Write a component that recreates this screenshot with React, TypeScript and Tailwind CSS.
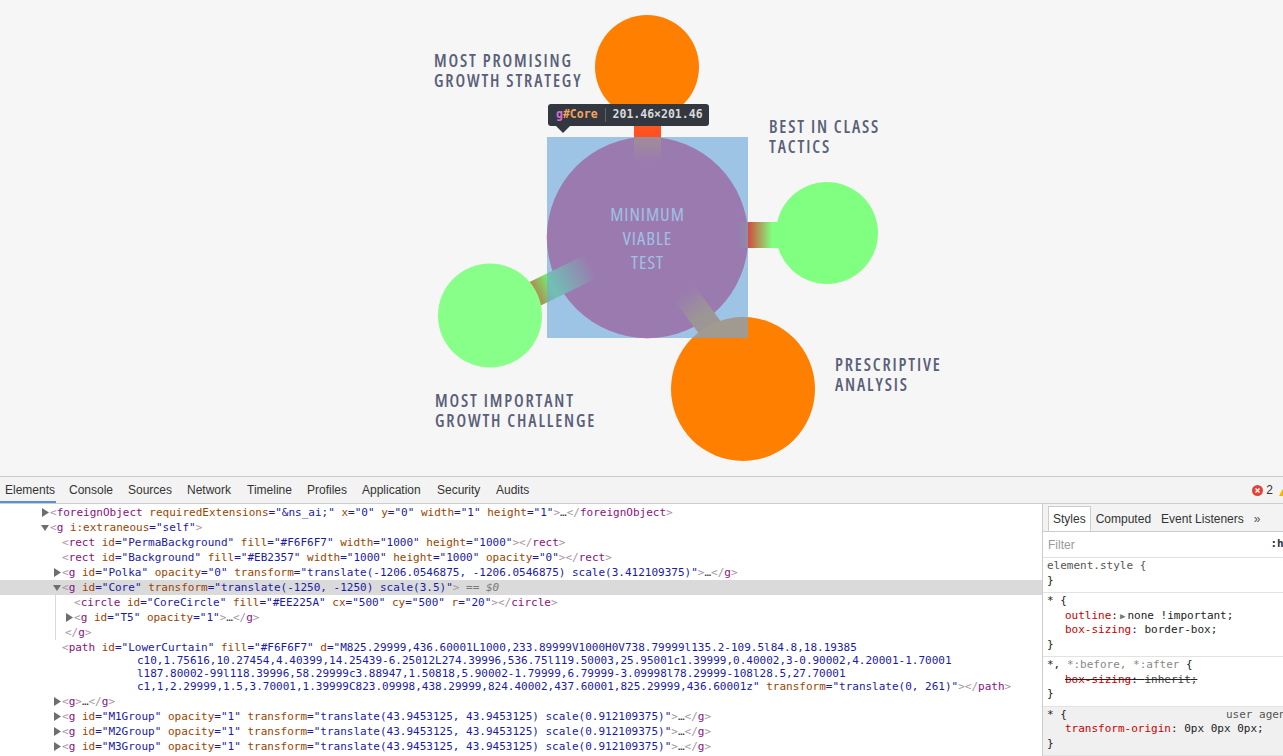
import React from 'react';

const mono = "font-['DejaVu_Sans_Mono','Liberation_Mono',monospace]";
const sans = "font-['Liberation_Sans','Helvetica',sans-serif]";
const label =
  "absolute whitespace-nowrap font-['Open_Sans',sans-serif] [font-stretch:75%] text-[17px] leading-[20px] font-semibold tracking-[1.85px] text-[#5a6079]";

// devtools markup tokens
const B = ({ children }: { children: React.ReactNode }) => <span className="text-[#a894a6]">{children}</span>;
const Tg = ({ children }: { children: React.ReactNode }) => <span className="text-[#881280]">{children}</span>;
const An = ({ children }: { children: React.ReactNode }) => <span className="text-[#994500]">{children}</span>;
const Av = ({ children }: { children: React.ReactNode }) => <span className="text-[#1a1aa6]">{children}</span>;

type Mode = 'open' | 'empty' | 'fold';

const tag = (name: string, attrs: [string, string][], mode: Mode) => (
  <>
    <B>&lt;</B>
    <Tg>{name}</Tg>
    {attrs.map(([n, v], i) => (
      <React.Fragment key={i}>
        {' '}
        <An>{n}</An>
        <Av>="{v}"</Av>
      </React.Fragment>
    ))}
    <B>&gt;</B>
    {mode === 'fold' && <span className="text-[#303942]">…</span>}
    {mode !== 'open' && (
      <>
        <B>&lt;/</B>
        <Tg>{name}</Tg>
        <B>&gt;</B>
      </>
    )}
  </>
);

const Twisty = ({ open }: { open?: boolean }) => (
  <svg width="9" height="9" viewBox="0 0 9 9" className="shrink-0">
    {open ? <polygon points="0,2 8,2 4,8" fill="#6e6e6e" /> : <polygon points="1,0 8,4.5 1,9" fill="#6e6e6e" />}
  </svg>
);

const Row = ({
  x,
  twisty,
  hl,
  children,
}: {
  x: number;
  twisty?: 'open' | 'closed';
  hl?: boolean;
  children: React.ReactNode;
}) => (
  <div
    className={`flex items-center h-[15px] whitespace-nowrap ${hl ? 'bg-[#dadada]' : ''}`}
    style={{ paddingLeft: x - 9 }}
  >
    <span className="w-[9px] flex items-center">{twisty && <Twisty open={twisty === 'open'} />}</span>
    <span>{children}</span>
  </div>
);

const M = (id: string) =>
  tag('g', [
    ['id', id],
    ['opacity', '1'],
    ['transform', 'translate(43.9453125, 43.9453125) scale(0.912109375)'],
  ], 'fold');

const Diagram = () => (
  <div className="relative h-[476px] bg-[#f6f6f7] overflow-hidden">
    <svg className="absolute left-0 top-0" width="1283" height="476" viewBox="0 0 1283 476">
      <defs>
        <linearGradient id="gTop" x1="0" y1="110" x2="0" y2="162" gradientUnits="userSpaceOnUse">
          <stop offset="0" stopColor="#ff5e24" />
          <stop offset="0.65" stopColor="#ff4c20" />
          <stop offset="1" stopColor="#ee225a" />
        </linearGradient>
        <linearGradient id="gRight" x1="736" y1="0" x2="772" y2="0" gradientUnits="userSpaceOnUse">
          <stop offset="0" stopColor="#ee225a" />
          <stop offset="0.4" stopColor="#cc5a42" />
          <stop offset="1" stopColor="#80ff80" />
        </linearGradient>
        <linearGradient id="gLeft" x1="530" y1="296" x2="592" y2="266" gradientUnits="userSpaceOnUse">
          <stop offset="0" stopColor="#c06a4c" />
          <stop offset="0.35" stopColor="#74ee6a" />
          <stop offset="1" stopColor="#ee225a" />
        </linearGradient>
        <linearGradient id="gBottom" x1="684" y1="292" x2="740" y2="370" gradientUnits="userSpaceOnUse">
          <stop offset="0" stopColor="#ee225a" />
          <stop offset="0.3" stopColor="#f37010" />
          <stop offset="1" stopColor="#ff7f00" />
        </linearGradient>
      </defs>
      <circle cx="647" cy="67" r="52" fill="#ff7f00" />
      <circle cx="647.5" cy="237.5" r="100.7" fill="#ee225a" />
      <rect x="634" y="110" width="27" height="52" fill="url(#gTop)" />
      <rect x="734" y="222" width="50" height="26" fill="url(#gRight)" />
      <line x1="510" y1="306" x2="592" y2="266" stroke="url(#gLeft)" strokeWidth="26" />
      <line x1="684" y1="292" x2="742" y2="372" stroke="url(#gBottom)" strokeWidth="25" />
      <circle cx="827" cy="233" r="51" fill="#80ff80" />
      <circle cx="490" cy="315.5" r="52" fill="#88ff88" />
      <circle cx="743" cy="389" r="72" fill="#ff7f00" />
    </svg>

    <div className={`${label} left-[434px] top-[51px]`}>
      MOST PROMISING
      <br />
      GROWTH STRATEGY
    </div>
    <div className={`${label} left-[769px] top-[117px]`}>
      BEST IN CLASS
      <br />
      TACTICS
    </div>
    <div className={`${label} left-[835px] top-[355px]`}>
      PRESCRIPTIVE
      <br />
      ANALYSIS
    </div>
    <div className={`${label} left-[435px] top-[391px]`}>
      MOST IMPORTANT
      <br />
      GROWTH CHALLENGE
    </div>

    {/* core label */}
    <div className="absolute left-[547px] top-[137px] w-[201px] h-[201px] flex flex-col items-center justify-center font-['Open_Sans',sans-serif] [font-stretch:75%] text-[18.5px] tracking-[1px] leading-[24px] text-[#fbeef5]">
      <span>MINIMUM</span>
      <span>VIABLE</span>
      <span>TEST</span>
    </div>

    {/* inspector highlight */}
    <div className="absolute left-[547px] top-[137px] w-[201px] h-[201px] bg-[rgba(111,168,220,0.66)]" />

    {/* inspector tooltip */}
    <div className="absolute left-[548px] top-[104px]">
      <div className={`h-[22px] w-[161px] rounded-[3px] bg-[#333740] flex items-center pl-[8px] text-[11.5px] font-bold ${mono}`}>
        <span className="text-[#d86fd6]">g</span>
        <span className="text-[#f2a55e]">#Core</span>
        <span className="mx-[7px] h-[14px] w-px bg-[#5f636b]" />
        <span className="text-[#d9d9d9]">201.46×201.46</span>
      </div>
      <div className="ml-[8px] w-0 h-0 border-l-[7px] border-r-[7px] border-t-[7px] border-l-transparent border-r-transparent border-t-[#333740]" />
    </div>
  </div>
);

const tabs: [string, number][] = [
  ['Elements', 64],
  ['Console', 59],
  ['Sources', 59],
  ['Network', 60],
  ['Timeline', 60],
  ['Profiles', 55],
  ['Application', 75],
  ['Security', 59],
  ['Audits', 50],
];

const Elements = () => (
  <div className={`w-[1042px] shrink-0 overflow-hidden pt-[1px] text-[11px] leading-[13px] text-[#303942] ${mono}`}>
    <Row x={50} twisty="closed">
      {tag('foreignObject', [
        ['requiredExtensions', '&ns_ai;'],
        ['x', '0'],
        ['y', '0'],
        ['width', '1'],
        ['height', '1'],
      ], 'fold')}
    </Row>
    <Row x={50} twisty="open">
      {tag('g', [['i:extraneous', 'self']], 'open')}
    </Row>
    <Row x={62}>
      {tag('rect', [
        ['id', 'PermaBackground'],
        ['fill', '#F6F6F7'],
        ['width', '1000'],
        ['height', '1000'],
      ], 'empty')}
    </Row>
    <Row x={62}>
      {tag('rect', [
        ['id', 'Background'],
        ['fill', '#EB2357'],
        ['width', '1000'],
        ['height', '1000'],
        ['opacity', '0'],
      ], 'empty')}
    </Row>
    <Row x={62} twisty="closed">
      {tag('g', [
        ['id', 'Polka'],
        ['opacity', '0'],
        ['transform', 'translate(-1206.0546875, -1206.0546875) scale(3.412109375)'],
      ], 'fold')}
    </Row>
    <Row x={62} twisty="open" hl>
      {tag('g', [
        ['id', 'Core'],
        ['transform', 'translate(-1250, -1250) scale(3.5)'],
      ], 'open')}
      <span className="text-[#7a7a7a]">
        {' '}== <span className="italic">$0</span>
      </span>
    </Row>
    <div className="ml-[55px] border-l border-[#d3dae6]">
      <Row x={18}>
        {tag('circle', [
          ['id', 'CoreCircle'],
          ['fill', '#EE225A'],
          ['cx', '500'],
          ['cy', '500'],
          ['r', '20'],
        ], 'empty')}
      </Row>
      <Row x={18} twisty="closed">
        {tag('g', [
          ['id', 'T5'],
          ['opacity', '1'],
        ], 'fold')}
      </Row>
      <Row x={6}>
        <B>&lt;/</B>
        <Tg>g</Tg>
        <B>&gt;</B>
      </Row>
    </div>
    <div className="pl-[62px] py-[1px] whitespace-nowrap">
      <div>
        <B>&lt;</B>
        <Tg>path</Tg> <An>id</An>
        <Av>="LowerCurtain"</Av> <An>fill</An>
        <Av>="#F6F6F7"</Av> <An>d</An>
        <Av>="M825.29999,436.60001L1000,233.89999V1000H0V738.79999l135.2-109.5l84.8,18.19385</Av>
      </div>
      <div className="pl-[75px]">
        <Av>c10,1.75616,10.27454,4.40399,14.25439-6.25012L274.39996,536.75l119.50003,25.95001c1.39999,0.40002,3-0.90002,4.20001-1.70001</Av>
      </div>
      <div className="pl-[75px]">
        <Av>l187.80002-99l118.39996,58.29999c3.88947,1.50818,5.90002-1.79999,6.79999-3.09998l78.29999-108l28.5,27.70001</Av>
      </div>
      <div className="pl-[75px]">
        <Av>c1,1,2.29999,1.5,3.70001,1.39999C823.09998,438.29999,824.40002,437.60001,825.29999,436.60001z"</Av>{' '}
        <An>transform</An>
        <Av>="translate(0, 261)"</Av>
        <B>&gt;&lt;/</B>
        <Tg>path</Tg>
        <B>&gt;</B>
      </div>
    </div>
    <Row x={62} twisty="closed">
      {tag('g', [], 'fold')}
    </Row>
    <Row x={62} twisty="closed">{M('M1Group')}</Row>
    <Row x={62} twisty="closed">{M('M2Group')}</Row>
    <Row x={62} twisty="closed">{M('M3Group')}</Row>
    <Row x={62} twisty="closed">{M('M4Group')}</Row>
  </div>
);

const Prop = ({ n, v, strike, arrow }: { n: string; v: string; strike?: boolean; arrow?: boolean }) => (
  <div className={`pl-[18px] whitespace-nowrap ${strike ? 'line-through' : ''}`}>
    <span className="text-[#c80000]">{n}</span>
    <span className="text-[#222]">:</span>
    {arrow ? (
      <span className="text-[#777] text-[9px] mx-[2px]">▶</span>
    ) : (
      ' '
    )}
    <span className={strike ? 'text-[#444]' : 'text-[#222]'}>{v};</span>
  </div>
);

const Styles = () => (
  <div className="flex-1 min-w-0 border-l border-[#cccccc] overflow-hidden bg-white flex flex-col">
    <div className={`h-[28px] shrink-0 bg-[#f3f3f3] border-b border-[#cccccc] flex items-end pl-[5px] text-[12px] text-[#333] whitespace-nowrap ${sans}`}>
      <div className="h-[25px] px-[4px] bg-white border border-b-0 border-[#cccccc] flex items-center">Styles</div>
      <div className="h-[25px] px-[5px] flex items-center">Computed</div>
      <div className="h-[25px] px-[5px] flex items-center">Event Listeners</div>
      <div className="h-[25px] px-[5px] flex items-center text-[#555]">»</div>
    </div>
    <div className={`h-[26px] shrink-0 border-b border-[#e0e0e0] flex items-center justify-between pl-[5px] whitespace-nowrap`}>
      <span className={`text-[12px] text-[#9a9a9a] ${sans}`}>Filter</span>
      <span className={`text-[11px] font-bold text-[#333] translate-x-[47px] ${mono}`}>:hov .cls</span>
    </div>
    <div className={`text-[11px] leading-[14.5px] text-[#222] ${mono}`}>
      <div className="pl-[4px] pt-[1px] pb-[4px] border-b border-[#e2e2e2]">
        <div className="text-[#555]">element.style {'{'}</div>
        <div>{'}'}</div>
      </div>
      <div className="pl-[4px] pt-[1px] pb-[4px] border-b border-[#e2e2e2]">
        <div>* {'{'}</div>
        <Prop n="outline" v="none !important" arrow />
        <Prop n="box-sizing" v="border-box" />
        <div>{'}'}</div>
      </div>
      <div className="pl-[4px] pt-[1px] pb-[4px] border-b border-[#e2e2e2]">
        <div className="whitespace-nowrap">
          *, <span className="text-[#888]">*:before, *:after</span> {'{'}
        </div>
        <Prop n="box-sizing" v="inherit" strike />
        <div>{'}'}</div>
      </div>
      <div className="pl-[4px] pt-[1px] pb-[4px] border-b border-[#e2e2e2] bg-[#f0f0f0]">
        <div className="flex justify-between whitespace-nowrap">
          <span>* {'{'}</span>
          <span className="text-[#555] translate-x-[82px]">user agent stylesheet</span>
        </div>
        <Prop n="transform-origin" v="0px 0px 0px" />
        <div>{'}'}</div>
      </div>
    </div>
  </div>
);

const DevTools = () => (
  <div className="h-[280px] border-t border-[#cbcbcb] bg-white flex flex-col">
    <div className={`h-[27px] shrink-0 bg-[#f3f3f3] border-b border-[#cdcdcd] flex items-stretch text-[12px] text-[#333] ${sans}`}>
      {tabs.map(([t, w], i) => (
        <div key={t} className="relative flex items-center pl-[5px] pb-[1px]" style={{ width: w }}>
          {t}
          {i === 0 && <div className="absolute left-0 bottom-0 h-[2px] w-[56px] bg-[#5b8fdb]" />}
        </div>
      ))}
      <div className="flex-1" />
      <div className="flex items-center gap-[3px] translate-x-[8px]">
        <svg width="11" height="11" viewBox="0 0 11 11">
          <circle cx="5.5" cy="5.5" r="5.5" fill="#e0453b" />
          <path d="M3.5 3.5 L7.5 7.5 M7.5 3.5 L3.5 7.5" stroke="#fff" strokeWidth="1.4" />
        </svg>
        <span className="text-[#333] mr-[3px]">2</span>
        <svg width="12" height="11" viewBox="0 0 12 11">
          <polygon points="6,0 12,11 0,11" fill="#f4b400" />
        </svg>
      </div>
    </div>
    <div className="flex flex-1 min-h-0">
      <Elements />
      <Styles />
    </div>
  </div>
);

export default function App() {
  return (
    <div className="w-[1283px] h-[756px] overflow-hidden bg-white">
      <Diagram />
      <DevTools />
    </div>
  );
}
